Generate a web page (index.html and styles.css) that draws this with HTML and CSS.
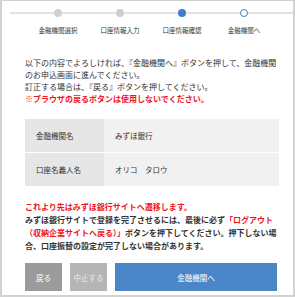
FILE: index.html
```html
<!DOCTYPE html>
<html lang="ja">
<head>
  <meta charset="UTF-8" />
  <title>口座情報確認</title>
  <meta name="viewport" content="width=device-width, initial-scale=1" />
  <link rel="stylesheet" href="styles.css">
</head>
<body>
  <div class="frame">
    <ol class="steps">
      <li class="step done"><span class="dot"></span><span class="label">金融機関選択</span></li>
      <li class="step done"><span class="dot"></span><span class="label">口座情報入力</span></li>
      <li class="step current"><span class="dot"></span><span class="label">口座情報確認</span></li>
      <li class="step next"><span class="dot"></span><span class="label">金融機関へ</span></li>
    </ol>

    <div class="content">
      <p class="intro">
        以下の内容でよろしければ、『金融機関へ』ボタンを押して、金融機関のお申込画面に進んでください。<br>
        訂正する場合は、『戻る』ボタンを押してください。<br>
        <strong class="red">※ブラウザの戻るボタンは使用しないでください。</strong>
      </p>

      <table class="confirm">
        <tr><th>金融機関名</th><td>みずほ銀行</td></tr>
        <tr><th>口座名義人名</th><td>オリコ　タロウ</td></tr>
      </table>

      <p class="notice">
        <span class="red">これより先はみずほ銀行サイトへ遷移します。</span><br>
        みずほ銀行サイトで登録を完了させるには、最後に必ず<span class="red">「ログアウト</span><br><span class="red">（収納企業サイトへ戻る）」</span>ボタンを押下してください。押下しない場合、口座振替の設定が完了しない場合があります。
      </p>

      <div class="buttons">
        <button class="btn back">戻る</button>
        <button class="btn cancel">中止する</button>
        <button class="btn go">金融機関へ</button>
      </div>
    </div>
  </div>
</body>
</html>
```

FILE: styles.css
```css
body { margin: 0; font-family: "Noto Sans CJK JP", "Noto Sans", sans-serif; color: #333; }
.frame {
  width: 295px; height: 297px; box-sizing: border-box; overflow: hidden;
  border: 2px solid #d2d2d2; border-top-width: 1px; background: #fff;
}

.steps {
  list-style: none; margin: 0 0 0 8px; padding: 0 0 0 17px;
  display: flex;
  background: linear-gradient(#e2e2e2, #e2e2e2) no-repeat 0 11px / 100% 2px;
}
.step { width: 62px; display: flex; flex-direction: column; align-items: center; padding-top: 8px; }
.dot { width: 8px; height: 8px; border-radius: 50%; box-sizing: border-box; background: #cfcfcf; }
.current .dot { background: #3f7fcc; }
.next .dot { background: #fff; border: 1.5px solid #3f7fcc; }
.label { margin-top: 9px; font-size: 6.5px; line-height: 8px; white-space: nowrap; }

.content { padding: 23px 12px 0 23px; }
.intro, .notice { margin: 0; font-size: 8px; line-height: 12px; }
.notice { margin-top: 14px; line-height: 13px; font-weight: bold; }
.red { color: #f0141e; font-weight: bold; }

.confirm { margin-top: 14px; width: 254px; border-collapse: collapse; font-size: 7.5px; }
.confirm th, .confirm td { height: 33px; padding: 0; text-align: left; font-weight: normal; }
.confirm tr + tr th, .confirm tr + tr td { border-top: 1px solid #fff; }
.confirm th { width: 79px; padding-left: 11px; box-sizing: border-box; background: #e6e6e6; }
.confirm td { padding-left: 11px; background: #f1f1f1; }

.buttons { margin-top: 11px; display: flex; gap: 8px; }
.btn {
  height: 28px; border: 0; padding: 0; color: #fff; font-family: inherit; font-size: 7.5px;
}
.back { width: 37px; background: #9b9b9b; }
.cancel { width: 37px; background: #b5b5b5; color: #ececec; }
.go { width: 162px; background: #4a86c8; }
```
